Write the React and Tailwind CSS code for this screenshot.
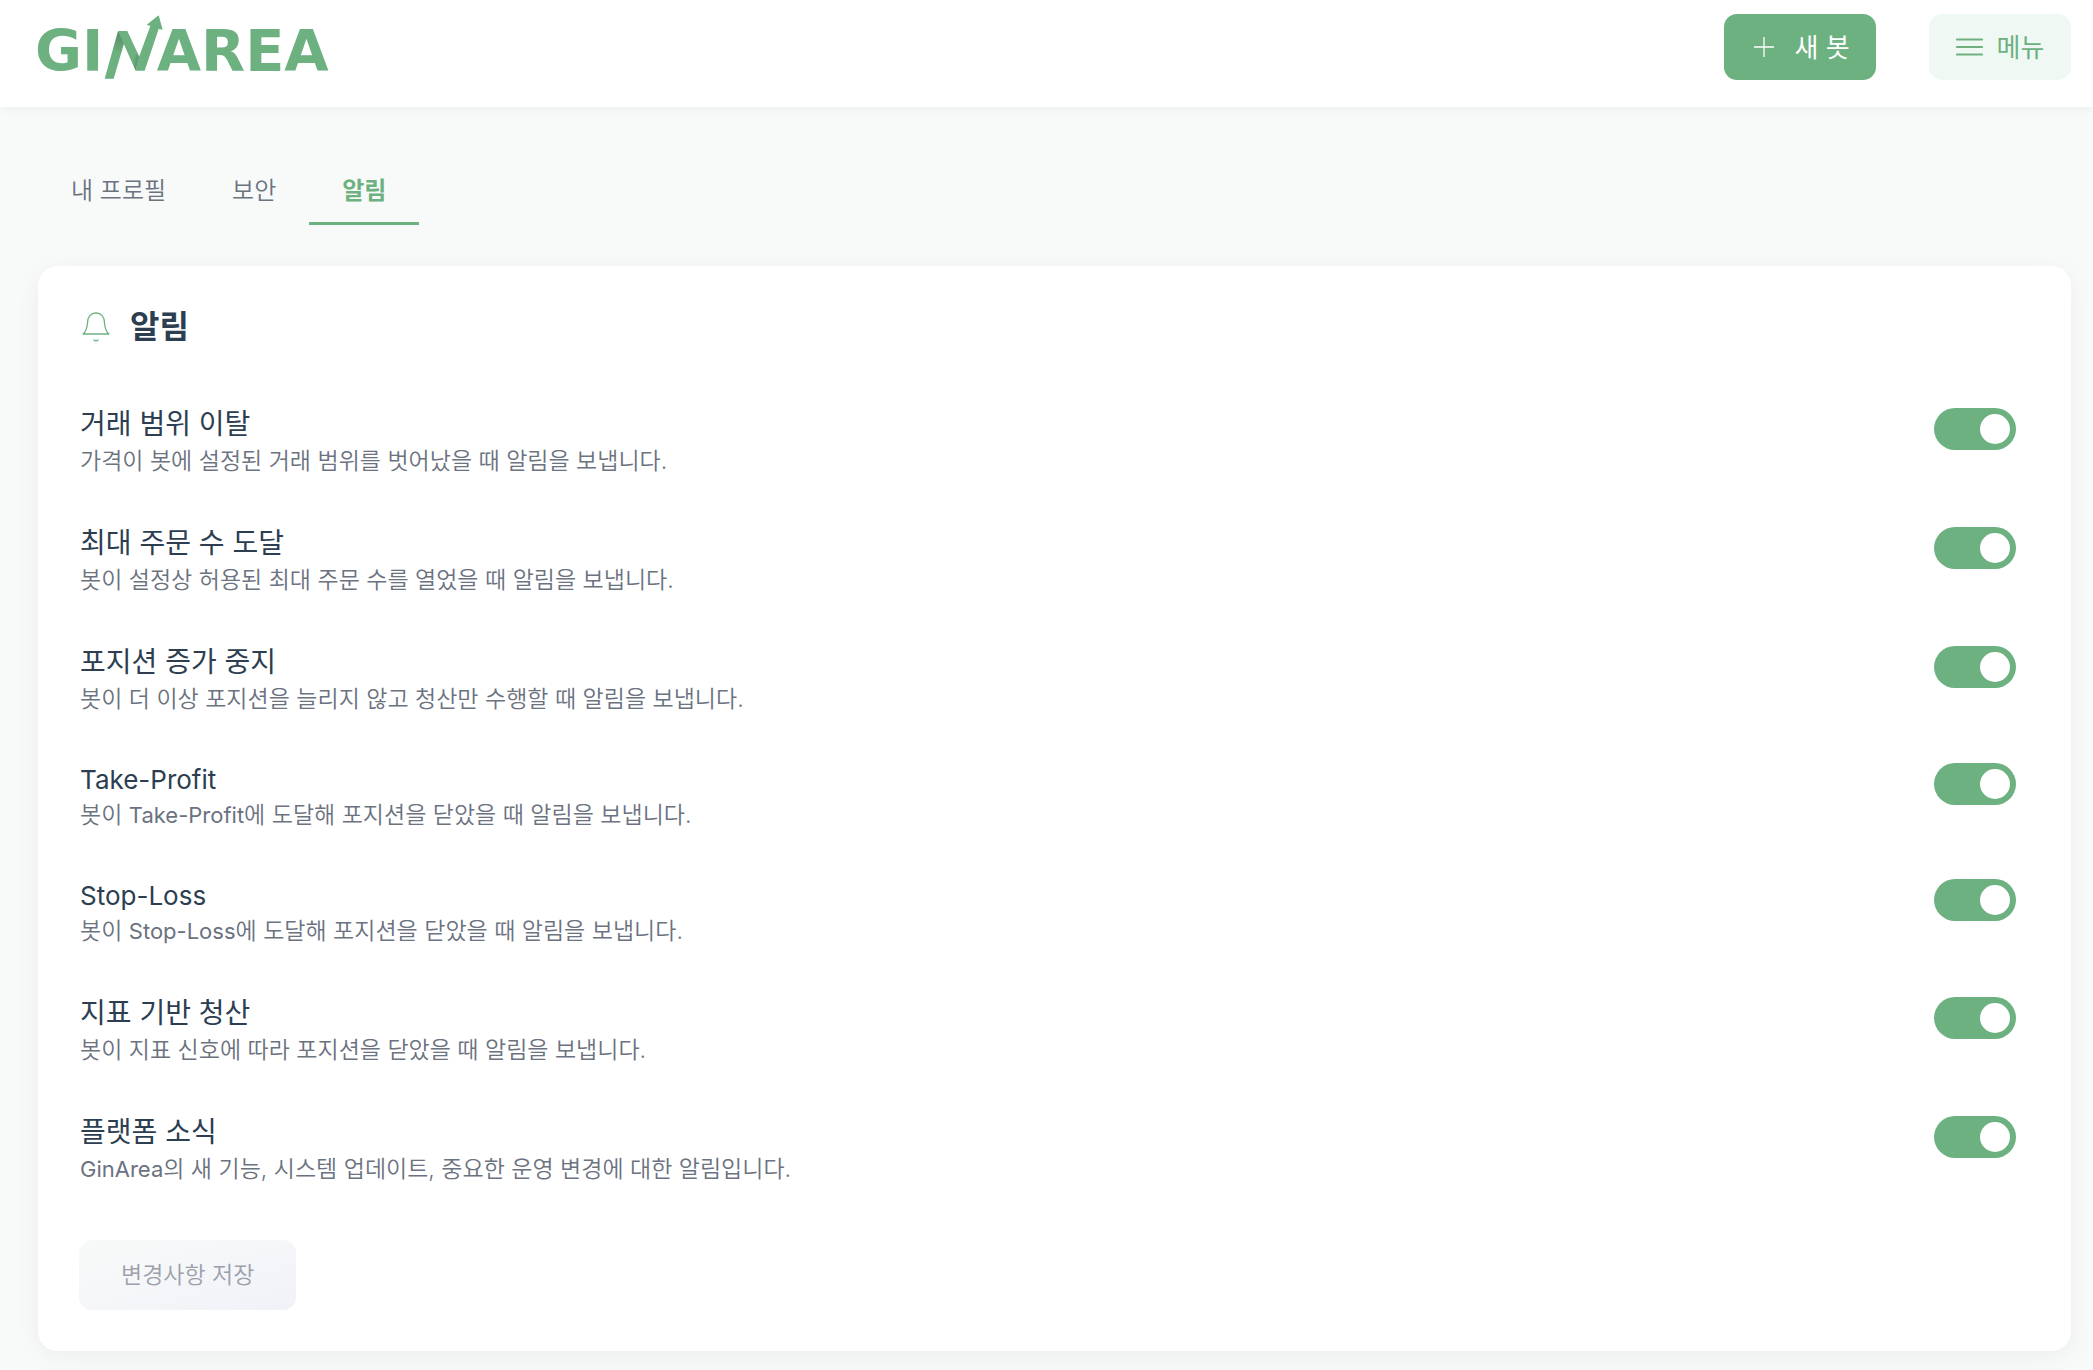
import { useState } from "react";

const ITEMS = [
  { id: "range", title: "거래 범위 이탈", text: "가격이 봇에 설정된 거래 범위를 벗어났을 때 알림을 보냅니다." },
  { id: "orders", title: "최대 주문 수 도달", text: "봇이 설정상 허용된 최대 주문 수를 열었을 때 알림을 보냅니다." },
  { id: "position", title: "포지션 증가 중지", text: "봇이 더 이상 포지션을 늘리지 않고 청산만 수행할 때 알림을 보냅니다." },
  { id: "tp", latin: true, title: "Take-Profit", text: "봇이 Take-Profit에 도달해 포지션을 닫았을 때 알림을 보냅니다." },
  { id: "sl", latin: true, title: "Stop-Loss", text: "봇이 Stop-Loss에 도달해 포지션을 닫았을 때 알림을 보냅니다." },
  { id: "indicator", title: "지표 기반 청산", text: "봇이 지표 신호에 따라 포지션을 닫았을 때 알림을 보냅니다." },
  { id: "news", title: "플랫폼 소식", text: "GinArea의 새 기능, 시스템 업데이트, 중요한 운영 변경에 대한 알림입니다." },
];

const TABS = ["내 프로필", "보안", "알림"];

function Logo() {
  return (
    <svg width="306" height="64" viewBox="54 45 918 192" overflow="visible" role="img" aria-label="GINAREA">
      <defs>
        <linearGradient id="foldLeft" gradientUnits="userSpaceOnUse" x1="302" y1="100" x2="288" y2="158">
          <stop offset="0" stopColor="#568c66" />
          <stop offset="1" stopColor="#6cb17f" />
        </linearGradient>
        <linearGradient id="foldRight" gradientUnits="userSpaceOnUse" x1="358" y1="190" x2="338" y2="184">
          <stop offset="0" stopColor="#548863" />
          <stop offset="1" stopColor="#6cb17f" />
        </linearGradient>
      </defs>
      <g fill="#6cb17f" fontFamily="'DejaVu Sans', sans-serif" fontWeight="700" fontSize="172">
        <text x="45" y="214">GI</text>
        <text x="410" y="214">AREA</text>
      </g>
      <path d="M294 93 L254 236 H281 L314 124 Z" fill="url(#foldLeft)" />
      <path d="M347 212 H374 L416 87 L428 89 L416 46 L380 74 L391 78 L358 168 Z" fill="#6cb17f" />
      <path d="M294 93 H322 L358 170 L347 212 Z" fill="url(#foldRight)" />
    </svg>
  );
}

function BellIcon() {
  return (
    <svg width="28" height="30" viewBox="0 0 28 30" fill="none" stroke="#6cb17f" strokeWidth="1.3" strokeLinecap="round" strokeLinejoin="round" aria-hidden="true">
      <path d="M1 22 H27 C24 20 23 16 22.5 11 C22.5 4.500 19 1 14 1 C9 1 5.500 4.500 5.500 11 C5 16 4 20 1 22 Z" />
      <path d="M12 28 Q14 29.500 16 28" />
    </svg>
  );
}

// Latin words are set in the regular weight inside the lighter Korean text.
function MixedText({ children }) {
  return children.split(/([A-Za-z-]+)/).map((part, i) =>
    i % 2 ? (
      <span key={i} className="text-[22px] font-normal">
        {part}
      </span>
    ) : (
      part
    ),
  );
}

export default function App() {
  const [on, setOn] = useState(() => Object.fromEntries(ITEMS.map((i) => [i.id, true])));
  return (
    <div className="min-h-screen bg-[#f8faf9] font-['Inter','Noto_Sans_CJK_KR',sans-serif] text-[#2c3e50]">
      <header className="flex items-start justify-between bg-white pt-[14px] pr-[22px] pb-[27px] pl-[38px] shadow-[0_2px_8px_rgba(0,0,0,0.05)]">
        <a href="#" className="mt-px block">
          <Logo />
        </a>
        <div className="flex gap-[53px]">
          <button type="button" className="flex h-[66px] w-[152px] items-center justify-center gap-5 rounded-[13px] bg-[#6cb17f] pl-1 text-[26px] text-white">
            <svg width="20" height="20" viewBox="0 0 20 20" stroke="currentColor" strokeWidth="1.3" aria-hidden="true">
              <path d="M0 10 H20 M10 0 V20" />
            </svg>
            새 봇
          </button>
          <button type="button" className="flex h-[66px] w-[142px] items-center justify-center gap-[14px] rounded-[13px] bg-[#f0f8f4] text-[26px] text-[#6cb17f]">
            <svg width="27" height="20" viewBox="0 0 27 20" stroke="currentColor" strokeWidth="2.200" strokeLinecap="round" aria-hidden="true">
              <path d="M1 2.500 H26 M1 10 H26 M1 17.500 H26" />
            </svg>
            메뉴
          </button>
        </div>
      </header>

      <main className="pt-[53px] pr-[22px] pb-[19px] pl-[38px]">
        <div role="tablist" className="flex">
          {TABS.map((tab, i) => (
            <button
              key={tab}
              type="button"
              role="tab"
              aria-selected={i === 2}
              className={
                i === 2
                  ? "h-[65px] border-b-[3px] border-[#6cb17f] px-[33px] text-[24px] font-bold text-[#6cb17f]"
                  : "h-[65px] border-b-[3px] border-transparent px-[33px] text-[24px] font-[350] text-[#6b7280]"
              }
            >
              {tab}
            </button>
          ))}
        </div>

        <section className="mt-[41px] rounded-[20px] bg-white pt-[38px] pr-[55px] pb-[41px] pl-[41px] shadow-[0_5px_26px_rgba(0,0,0,0.05)]">
          <h1 className="flex h-[46px] items-center gap-5 pl-[3px] text-[32px] font-bold">
            <BellIcon />
            알림
          </h1>
          <ul className="mt-[54px]">
            {ITEMS.map((item) => (
              <li key={item.id} className="flex items-start justify-between pb-[44px]">
                <label htmlFor={item.id} className="block pt-[2px] pl-px">
                  <span className={item.latin ? "block text-[26px] leading-[34px]" : "block text-[28px] leading-[37px]"}>{item.title}</span>
                  <span className="block h-[36px] text-[23px] leading-[36px] font-[350] text-[#6b7280]">
                    <MixedText>{item.text}</MixedText>
                  </span>
                </label>
                <input
                  id={item.id}
                  type="checkbox"
                  role="switch"
                  checked={on[item.id]}
                  onChange={() => setOn({ ...on, [item.id]: !on[item.id] })}
                  className={`${item.latin ? "mt-[2px]" : "mt-1"} block h-[42px] w-[82px] shrink-0 appearance-none rounded-full bg-gray-300 p-[6px] before:block before:size-[30px] before:rounded-full before:bg-white before:content-[''] checked:bg-[#6cb17f] checked:before:translate-x-[40px]`}
                />
              </li>
            ))}
          </ul>
          <button type="button" disabled className="mt-[9px] block h-[70px] rounded-[13px] bg-linear-to-br from-[#f8faf9] to-[#f0f2f8] px-[42px] text-[23px] font-[350] text-[#9ca0ab]">
            변경사항 저장
          </button>
        </section>
      </main>
    </div>
  );
}
